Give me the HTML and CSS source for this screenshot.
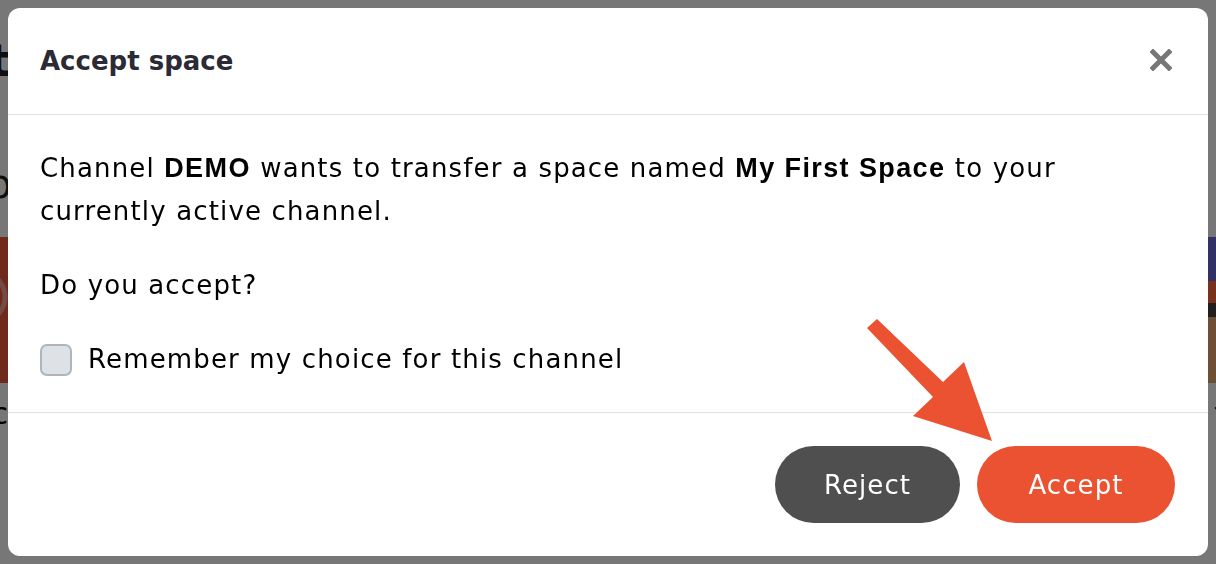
FILE: index.html
```html
<!DOCTYPE html>
<html lang="en">
<head>
<meta charset="utf-8">
<title>Accept space</title>
<link rel="stylesheet" href="styles.css">
</head>
<body>
<div class="page">
  <div class="page-head"><span>Most</span></div>
  <div class="page-sub"><span>Top</span></div>
  <div class="cards">
    <div class="card card-a"></div>
    <div class="card card-b"></div>
  </div>
  <div class="captions"><span class="cap-l">Disc</span><span class="cap-r">t</span></div>
</div>

<div class="overlay">
  <div class="modal">
    <div class="modal-header">
      <h2 class="modal-title">Accept space</h2>
      <button class="close" aria-label="Close">
        <svg width="22" height="22" viewBox="0 0 22 22"><path d="M3 3 L19 19 M19 3 L3 19" stroke="#777" stroke-width="5" stroke-linecap="square"/></svg>
      </button>
    </div>
    <div class="modal-body">
      <p>Channel <b>DEMO</b> wants to transfer a space named <b>My First Space</b> to your currently active channel.</p>
      <p>Do you accept?</p>
      <label class="check"><span class="box"></span><span>Remember my choice for this channel</span></label>
    </div>
    <div class="modal-footer">
      <button class="btn btn-reject">Reject</button>
      <button class="btn btn-accept">Accept</button>
    </div>
    <svg class="arrow" width="140" height="130" viewBox="860 315 140 130">
      <polygon fill="#eb5232" points="867,328 877,319 943,382 964,362 992,441 913,416 933,397"/>
    </svg>
  </div>
</div>
</body>
</html>
```
FILE: styles.css
```css
* { box-sizing: border-box; }
html, body { margin: 0; padding: 0; }
body {
  width: 1216px;
  height: 564px;
  overflow: hidden;
  background: #fff;
  font-family: "DejaVu Sans", "Noto Sans", sans-serif;
  color: #000;
}

.page {
  display: flex;
  flex-direction: column;
  width: 1216px;
}
.page-head {
  width: 10px;
  height: 120px;
  display: flex;
  justify-content: flex-end;
  align-items: center;
  font-size: 44px;
  font-weight: bold;
  color: #222;
  white-space: nowrap;
}
.page-sub {
  width: 12px;
  height: 117px;
  display: flex;
  justify-content: flex-end;
  align-items: center;
  padding-top: 10px;
  font-size: 40px;
  color: #222;
  white-space: nowrap;
}
.cards {
  display: flex;
  justify-content: space-between;
  height: 146px;
}
.card { width: 300px; }
.card-a { background: radial-gradient(circle at -20px 60px, #ee5a3c 0 22px, #f4a090 23px 27px, #ee5a3c 28px); }
.card-b {
  background: linear-gradient(#6a6ad8 0 30%, #ff6a3c 30% 45%, #444 45% 55%, #e8aa70 55%);
}
.captions {
  display: flex;
  justify-content: space-between;
  font-size: 30px;
  height: 60px;
  align-items: center;
}
.cap-l { display: flex; justify-content: flex-end; width: 8px; white-space: nowrap; }
.cap-r { margin-right: -10px; }

.overlay {
  position: fixed;
  inset: 0;
  background: rgba(0, 0, 0, 0.533);
  padding: 8px;
  display: flex;
  align-items: flex-start;
}
.modal {
  position: relative;
  width: 1200px;
  height: 548px;
  background: #fff;
  border-radius: 12px;
  display: flex;
  flex-direction: column;
}
.modal-header {
  height: 107px;
  border-bottom: 1px solid #dee2e6;
  display: flex;
  align-items: center;
  justify-content: space-between;
  padding: 0 36px 0 32px;
}
.modal-title {
  margin: 0;
  font-size: 26px;
  font-weight: bold;
  color: #2b2a35;
}
.close {
  border: 0;
  background: none;
  padding: 0;
  width: 22px;
  height: 22px;
  display: block;
  margin-top: -3px;
}
.close svg { display: block; }

.modal-body {
  padding: 32px 32px 31px;
  border-bottom: 1px solid #dee2e6;
  font-size: 26px;
  line-height: 43px;
  letter-spacing: 1.15px;
}
.modal-body p { margin: 0 0 31px; max-width: 1090px; }
.modal-body b { font-family: "Liberation Sans", Arial, sans-serif; font-weight: bold; font-size: 27px; letter-spacing: 1.4px; }
.check {
  display: flex;
  align-items: center;
  gap: 16px;
}
.box {
  flex: none;
  width: 32px;
  height: 32px;
  border-radius: 7px;
  background: #dee2e6;
  border: 2px solid #adb5bd;
}

.modal-footer {
  flex: 1;
  display: flex;
  justify-content: flex-end;
  align-items: flex-start;
  gap: 17px;
  padding: 33px 33px 0;
}
.btn {
  height: 77px;
  border: 0;
  border-radius: 39px;
  padding: 0;
  font-family: "DejaVu Sans", sans-serif;
  font-size: 26px;
  letter-spacing: 1.1px;
  color: #fff;
}
.btn-reject { background: #4f4f4f; width: 185px; }
.btn-accept { background: #eb5232; width: 198px; }

.arrow {
  position: absolute;
  left: 852px;
  top: 307px;
}
```
